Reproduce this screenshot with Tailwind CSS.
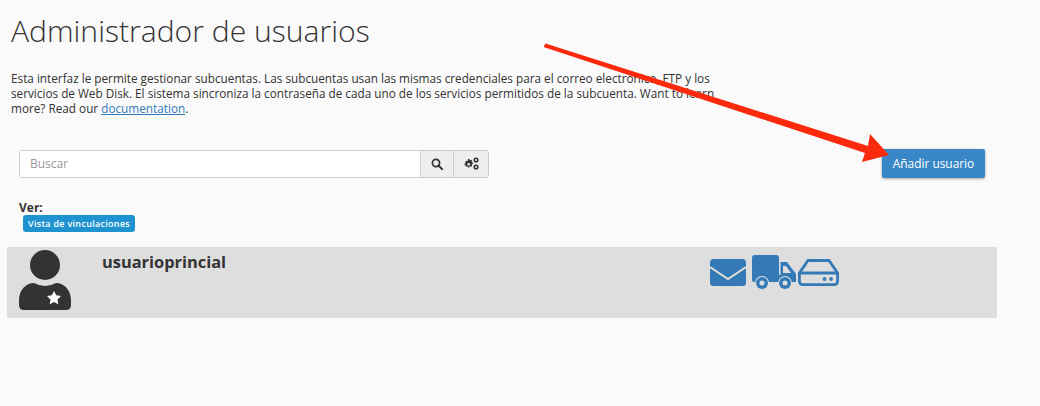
<!DOCTYPE html>
<html lang="es">
<head>
<meta charset="utf-8">
<script src="https://cdn.jsdelivr.net/npm/@tailwindcss/browser@4"></script>
</head>
<body class="m-0 bg-[#fafafa]">
<div class="relative w-[1040px] h-[406px] overflow-hidden font-['Open_Sans',sans-serif] text-[#333]">
  <h1 class="pl-[11px] pt-[12px] text-[30.1px] leading-[37px] font-light text-[#333]">Administrador de usuarios</h1>
  <p class="ml-[11px] mt-[22px] w-[725px] text-[11.75px] leading-[15px] text-[#333]">Esta interfaz le permite gestionar subcuentas. Las subcuentas usan las mismas credenciales para el correo electrónico, FTP y los servicios de Web Disk. El sistema sincroniza la contraseña de cada uno de los servicios permitidos de la subcuenta. Want to learn more? Read our <a class="text-[#337ab7] underline">documentation</a>.</p>

  <div class="flex items-center justify-between mt-[33px] pl-[19px] pr-[55px]">
    <div class="flex w-[470px] h-[28px] border border-[#ccc] rounded-[3px] overflow-hidden">
      <div class="flex-1 bg-white flex items-center pl-[10px] text-[12px] text-[#999]">Buscar</div>
      <div class="w-[33px] bg-[#eee] border-l border-[#ccc] flex items-center justify-center">
        <svg width="12" height="12" viewBox="0 0 12 12" fill="none" stroke="#333" stroke-width="1.7"><circle cx="5" cy="5" r="3.6"/><path d="M7.7 7.7 11.2 11.2" stroke-linecap="round" stroke-width="2"/></svg>
      </div>
      <div class="w-[35px] bg-[#eee] border-l border-[#ccc] flex items-center justify-center">
        <svg width="16" height="13" viewBox="0 0 16 13" fill="#333"><path d="M5 2 6.400 2l.5 1.300 1.300-.6 1 1-.6 1.300 1.300.5v1.400l-1.300.5.6 1.300-1 1-1.300-.6-.5 1.300H5l-.5-1.300-1.300.6-1-1 .6-1.300L1.500 7.900V6.500l1.300-.5-.6-1.300 1-1 1.300.6z"/><circle cx="5.700" cy="7.200" r="1.300" fill="#eee"/><circle cx="13" cy="3" r="1.800" fill="none" stroke="#333" stroke-width="1.500"/><circle cx="13" cy="10" r="1.800" fill="none" stroke="#333" stroke-width="1.500"/></svg>
      </div>
    </div>
    <button class="w-[103px] h-[29px] bg-[#3a87c8] rounded-[2px] text-white text-[11.9px] shadow-[0_1px_3px_rgba(0,0,0,0.35)]">Añadir usuario</button>
  </div>

  <div class="pl-[19px] mt-[22px] text-[12px] leading-[15px] font-bold text-[#333]">Ver:</div>
  <div class="pl-[23px]">
    <span class="block w-fit h-[17px] px-[5px] bg-[#1f93d0] rounded-[3px] text-white text-[9px] leading-[17px] font-semibold tracking-[0.3px]">Vista de vinculaciones</span>
  </div>

  <div class="flex ml-[7px] mt-[15px] w-[990px] h-[71px] bg-[#dedede]">
    <svg class="ml-[12px] mt-[3px] shrink-0" width="52" height="60" viewBox="0 0 52 60"><circle cx="26" cy="15" r="15" fill="#333"/><path d="M0 50C0 40 7 33 15 33Q26 39 37 33C45 33 52 40 52 50V55Q52 60 47 60H5Q0 60 0 55Z" fill="#333"/><path d="m35 41 2.200 4.300 4.800.7-3.500 3.400.8 4.800-4.300-2.300-4.300 2.300.8-4.800L28 46l4.800-.7z" fill="#fff"/></svg>
    <div class="ml-[31px] mt-[4px] text-[16.4px] leading-[22px] font-bold text-[#333]">usuarioprincial</div>
    <div class="flex items-start ml-[484px] mt-[8px]">
      <svg class="mt-[4px]" width="36" height="27" viewBox="0 0 36 27"><rect width="36" height="27" rx="3.500" fill="#337ab7"/><path d="M0 8 18 20 36 8" fill="none" stroke="#dedede" stroke-width="2"/></svg>
      <svg class="ml-[6px]" width="44" height="35" viewBox="0 0 44 35"><path d="M3 0H24Q27 0 27 3V26H3Q0 26 0 23V3Q0 0 3 0Z" fill="#337ab7"/><path d="M28.500 7H35L44 19V27H28.500Z" fill="#337ab7"/><path d="M31 11H34L39 18H31Z" fill="#dedede"/><rect y="20" width="44" height="7" rx="2" fill="#337ab7"/><circle cx="10" cy="28" r="7" fill="#dedede"/><circle cx="10" cy="28" r="6" fill="#337ab7"/><circle cx="10" cy="28" r="2.500" fill="#dedede"/><circle cx="33" cy="28" r="7" fill="#dedede"/><circle cx="33" cy="28" r="6" fill="#337ab7"/><circle cx="33" cy="28" r="2.500" fill="#dedede"/></svg>
      <svg class="mt-[4px] ml-[2px]" width="41" height="27" viewBox="0 0 41 27" fill="none" stroke="#337ab7" stroke-width="2.800"><path d="M10 1.500H31L39.600 14V22Q39.600 25.600 36 25.600H5Q1.400 25.600 1.400 22V14Z"/><path d="M2 14H39"/><circle cx="26.500" cy="20" r="1.900" fill="#337ab7" stroke="none"/><circle cx="33" cy="20" r="1.900" fill="#337ab7" stroke="none"/></svg>
    </div>
  </div>

  <svg class="absolute left-0 top-0 pointer-events-none" width="1040" height="406" viewBox="0 0 1040 406"><path d="M545.500 43.500 868 146 870 134 889 155 862 162 865 153 543.500 47Z" fill="#fb2a0c"/></svg>
</div>
</body>
</html>
